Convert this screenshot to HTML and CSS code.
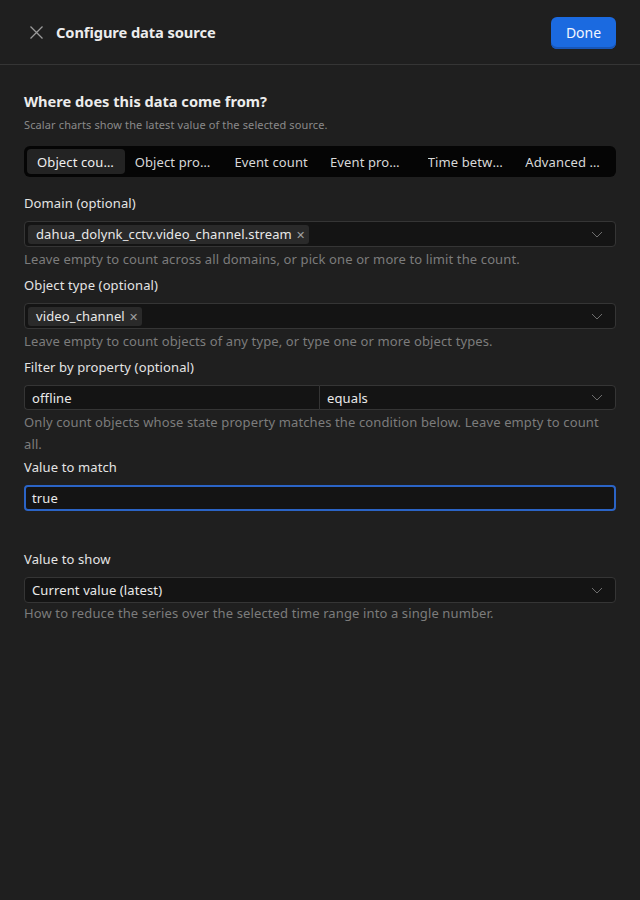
FILE: index.html
```html
<!DOCTYPE html>
<html lang="en">
<head>
<meta charset="utf-8">
<title>Configure data source</title>
<link rel="stylesheet" href="styles.css">
</head>
<body>
<div class="panel">
  <header class="header">
    <div class="header-left">
      <span class="close">
        <svg width="13" height="13" viewBox="0 0 13 13"><path d="M0.5 0.5L12.5 12.5M12.5 0.5L0.5 12.5" stroke="#9a9a9a" stroke-width="1.3" fill="none"/></svg>
      </span>
      <h1 class="title">Configure data source</h1>
    </div>
    <button class="done">Done</button>
  </header>
  <main class="body">
    <h2 class="heading">Where does this data come from?</h2>
    <p class="subtitle">Scalar charts show the latest value of the selected source.</p>
    <div class="tabs">
      <div class="tab active"><span>Object count</span></div>
      <div class="tab"><span>Object property</span></div>
      <div class="tab"><span>Event count</span></div>
      <div class="tab"><span>Event property</span></div>
      <div class="tab"><span>Time between</span></div>
      <div class="tab"><span>Advanced query</span></div>
    </div>

    <div class="field">
      <label class="label">Domain (optional)</label>
      <div class="control">
        <span class="chip">dahua_dolynk_cctv.video_channel.stream<span class="chip-x">✕</span></span>
        <span class="chev"><svg width="12" height="7" viewBox="0 0 12 7"><path d="M1 1L6 6L11 1" stroke="#6e6e6e" stroke-width="1" fill="none"/></svg></span>
      </div>
      <p class="help">Leave empty to count across all domains, or pick one or more to limit the count.</p>
    </div>

    <div class="field">
      <label class="label">Object type (optional)</label>
      <div class="control">
        <span class="chip">video_channel<span class="chip-x">✕</span></span>
        <span class="chev"><svg width="12" height="7" viewBox="0 0 12 7"><path d="M1 1L6 6L11 1" stroke="#6e6e6e" stroke-width="1" fill="none"/></svg></span>
      </div>
      <p class="help">Leave empty to count objects of any type, or type one or more object types.</p>
    </div>

    <div class="field">
      <label class="label">Filter by property (optional)</label>
      <div class="pair">
        <div class="control left"><span class="value">offline</span></div>
        <div class="control right"><span class="value">equals</span>
          <span class="chev"><svg width="12" height="7" viewBox="0 0 12 7"><path d="M1 1L6 6L11 1" stroke="#6e6e6e" stroke-width="1" fill="none"/></svg></span>
        </div>
      </div>
      <p class="help">Only count objects whose state property matches the condition below. Leave empty to count all.</p>
    </div>

    <div class="field tight">
      <label class="label">Value to match</label>
      <div class="control focus"><span class="value">true</span></div>
    </div>

    <div class="field spaced">
      <label class="label">Value to show</label>
      <div class="control"><span class="value">Current value (latest)</span>
        <span class="chev"><svg width="12" height="7" viewBox="0 0 12 7"><path d="M1 1L6 6L11 1" stroke="#6e6e6e" stroke-width="1" fill="none"/></svg></span>
      </div>
      <p class="help last">How to reduce the series over the selected time range into a single number.</p>
    </div>
  </main>
</div>
</body>
</html>
```
FILE: styles.css
```css
* { box-sizing: border-box; }
html, body {
  margin: 0;
  padding: 0;
  background: #1f1f1f;
  height: 100%;
}
body {
  font-family: "Noto Sans", "Open Sans", sans-serif;
  color: #e6e6e6;
  letter-spacing: 0.12px;
}
.panel {
  width: 640px;
  min-height: 900px;
  background: #1f1f1f;
}
.header {
  height: 65px;
  border-bottom: 1px solid #353535;
  display: flex;
  align-items: center;
  justify-content: space-between;
  padding: 0 24px 0 30px;
}
.header-left {
  display: flex;
  align-items: center;
  gap: 13px;
}
.close {
  display: flex;
  width: 13px;
  height: 13px;
}
.title {
  margin: 0;
  font-size: 14.7px;
  font-weight: 700;
  color: #ececec;
  letter-spacing: -0.1px;
}
.done {
  width: 65px;
  height: 32px;
  border: none;
  border-radius: 6px;
  background: #1b6ae0;
  box-shadow: inset 0 -2px 0 #1856b8;
  color: #f2f6ff;
  font-family: inherit;
  font-size: 14px;
  padding: 0;
  margin-top: 1px;
  line-height: 32px;
}
.body {
  padding: 26px 24px 0 24px;
}
.heading {
  margin: 0;
  font-size: 14.6px;
  font-weight: 700;
  line-height: 20px;
  color: #ececec;
  letter-spacing: 0;
}
.subtitle {
  margin: 6px 0 0 0;
  font-size: 11px;
  line-height: 16px;
  color: #8a8a8a;
}
.tabs {
  margin-top: 13px;
  height: 31px;
  background: #050505;
  border-radius: 6px;
  padding: 3px;
  display: grid;
  grid-template-columns: repeat(6, 1fr);
}
.tab {
  display: flex;
  align-items: center;
  justify-content: center;
  padding: 1px 10px 0 10px;
  font-size: 13px;
  color: #d8d8d8;
  border-radius: 4px;
  min-width: 0;
}
.tab span {
  overflow: hidden;
  white-space: nowrap;
  text-overflow: ellipsis;
}
.tab.active {
  background: #232323;
  color: #efefef;
}
.field {
  margin-top: 5px;
}
.tabs + .field {
  margin-top: 16px;
}
.field.tight {
  margin-top: 2px;
}
.field.spaced {
  margin-top: 38px;
}
.label {
  display: block;
  font-size: 13px;
  line-height: 20px;
  color: #e4e4e4;
  margin-bottom: 8px;
}
.control {
  height: 26px;
  background: #141414;
  border: 1px solid #353535;
  border-radius: 4px;
  display: flex;
  align-items: center;
  padding: 0 8px 0 3px;
}
.value {
  font-size: 13px;
  color: #eaeaea;
  padding-left: 4px;
}
.chip {
  display: inline-flex;
  align-items: center;
  height: 19px;
  background: #2a2a2a;
  border-radius: 3px;
  padding: 0 4px 0 8px;
  font-size: 13px;
  color: #e8e8e8;
  gap: 4px;
}
.chip-x {
  font-size: 11px;
  color: #a0a0a0;
}
.chev {
  margin-left: auto;
  display: flex;
  margin-right: 4px;
}
.pair {
  display: grid;
  grid-template-columns: 295px 1fr;
}
.pair .left {
  border-radius: 4px 0 0 4px;
  border-right: none;
  height: 25px;
}
.pair .right {
  border-radius: 0 4px 4px 0;
  height: 25px;
}
.control.focus {
  border: 2px solid #2b64c6;
  padding-left: 2px;
}
.help {
  margin: 1px 0 0 0;
  font-size: 13px;
  line-height: 22px;
  color: #7c7c7c;
}
.help.last {
  margin-top: -1px;
}
```
